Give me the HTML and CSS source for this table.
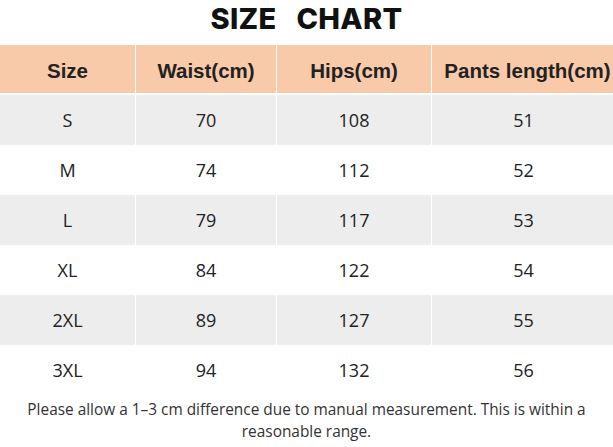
FILE: index.html
```html
<!DOCTYPE html>
<html>
<head>
<meta charset="utf-8">
<link rel="stylesheet" href="styles.css">
</head>
<body>
<div class="page">
  <h1 class="title">SIZE&nbsp;&nbsp;&nbsp;CHART</h1>
  <div class="table">
    <div class="row head">
      <div class="cell">Size</div><div class="cell">Waist(cm)</div><div class="cell">Hips(cm)</div><div class="cell">Pants length(cm)</div>
    </div>
    <div class="row gray"><div class="cell">S</div><div class="cell">70</div><div class="cell">108</div><div class="cell">51</div></div>
    <div class="row"><div class="cell">M</div><div class="cell">74</div><div class="cell">112</div><div class="cell">52</div></div>
    <div class="row gray"><div class="cell">L</div><div class="cell">79</div><div class="cell">117</div><div class="cell">53</div></div>
    <div class="row"><div class="cell">XL</div><div class="cell">84</div><div class="cell">122</div><div class="cell">54</div></div>
    <div class="row gray"><div class="cell">2XL</div><div class="cell">89</div><div class="cell">127</div><div class="cell">55</div></div>
    <div class="row"><div class="cell">3XL</div><div class="cell">94</div><div class="cell">132</div><div class="cell">56</div></div>
  </div>
  <p class="note">Please allow a 1–3 cm difference due to manual measurement. This is within a reasonable range.</p>
</div>
</body>
</html>
```
FILE: styles.css
```css
html, body { margin: 0; padding: 0; background: #fff; }
.page { width: 613px; overflow: hidden; }
.title {
  margin: 0;
  height: 45px;
  text-align: center;
  font-family: Inter, sans-serif;
  font-weight: 800;
  font-size: 29px;
  letter-spacing: 0.3px;
  line-height: 37px;
  color: #111;
}
.table { display: flex; flex-direction: column; }
.row {
  display: grid;
  grid-template-columns: 135px 140px 154px 183px;
  column-gap: 1px;
  height: 50px;
  background: #fff;
}
.row.head { height: 48px; margin-bottom: 2px; }
.cell {
  display: flex;
  align-items: center;
  justify-content: center;
  font-family: "Open Sans", sans-serif;
  font-size: 18px;
  color: #222;
}
.row.gray .cell { background: #ededed; }
.row.head .cell {
  background: #f9caa9;
  font-family: "Liberation Sans", Arial, sans-serif;
  font-weight: 700;
  font-size: 20.5px;
  color: #222;
  white-space: nowrap;
  padding-top: 4px;
  box-sizing: border-box;
}
.row.head .cell:last-child { padding-left: 8px; }
.note {
  margin: 4px 0 0;
  padding: 0 10px;
  text-align: center;
  font-family: "Open Sans", sans-serif;
  font-size: 15.4px;
  line-height: 22px;
  color: #333;
}
```
